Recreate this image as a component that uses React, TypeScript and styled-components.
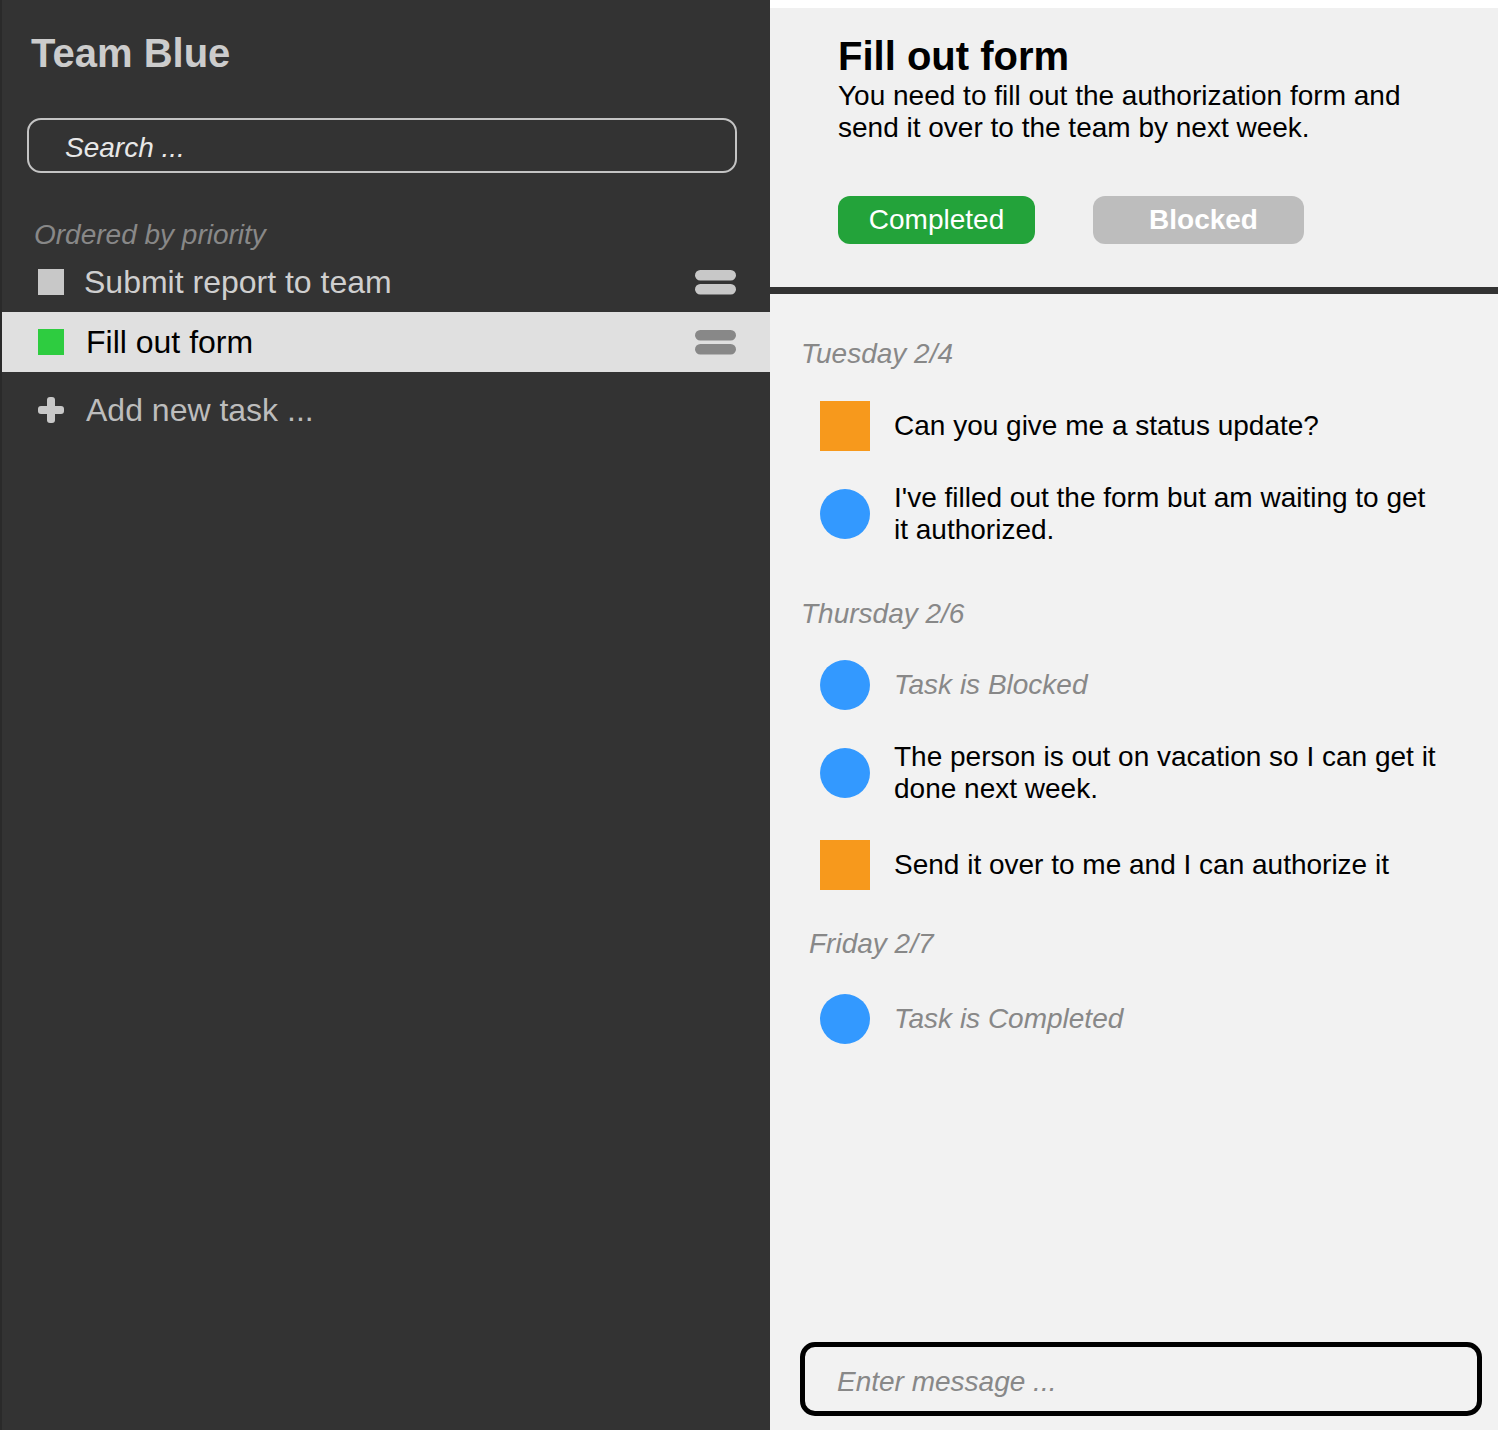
import { createGlobalStyle } from "styled-components";
import styled from "styled-components";

const GlobalStyle = createGlobalStyle`
    html, body {
        margin: 0;
        padding: 0;
        background: #f2f2f2;
    }
    * {
        box-sizing: border-box;
    }
    body {
        font-family: "Liberation Sans", Arial, sans-serif;
    }
`

const Page = styled.div`
    display: flex;
    width: 1498px;
    height: 1430px;
    overflow: hidden;
`

/* ---------- sidebar ---------- */

const Sidebar = styled.aside`
    width: 770px;
    flex-shrink: 0;
    display: flex;
    flex-direction: column;
    background: #333333;
    border-left: 2px solid #2a2a2a;
`

const TeamTitle = styled.h1`
    margin: 30px 0 0 29px;
    font-size: 40px;
    line-height: 46px;
    font-weight: bold;
    color: #cccccc;
`

const SearchBox = styled.input`
    margin: 42px 0 0 25px;
    width: 710px;
    height: 55px;
    padding: 5px 0 0 36px;
    border: 2px solid #c4c4c4;
    border-radius: 14px;
    background: transparent;
    font-family: inherit;
    font-size: 28px;
    font-style: italic;
    color: #e8e8e8;
    outline: none;

    &::placeholder {
        color: #e8e8e8;
    }
`

const OrderLabel = styled.div`
    margin: 45px 0 0 32px;
    font-size: 28px;
    line-height: 34px;
    font-style: italic;
    color: #888888;
`

const TaskList = styled.ul`
    list-style: none;
    margin: 0;
    padding: 0;
`

const TaskRow = styled.li<{ $selected: boolean }>`
    display: flex;
    align-items: center;
    gap: ${p => p.$selected ? "22px" : "20px"};
    height: 60px;
    padding: 0 34px 0 36px;
    background: ${p => p.$selected ? "#e0e0e0" : "transparent"};
    color: ${p => p.$selected ? "#000000" : "#cfcfcf"};
`

const PrioritySquare = styled.span<{ $color: string }>`
    width: 26px;
    height: 26px;
    flex-shrink: 0;
    background: ${p => p.$color};
`

const TaskName = styled.span`
    flex: 1;
    font-size: 32px;
    line-height: 36px;
`

const AddRow = styled.div`
    display: flex;
    align-items: center;
    gap: 22px;
    height: 76px;
    padding-left: 36px;
    color: #bdbdbd;
    font-size: 32px;
`

function Handle(props: { color: string }) {
    return (
        <svg width="41" height="25" viewBox="0 0 41 25">
            <rect x="0" y="0" width="41" height="10.5" rx="5.25" fill={props.color} />
            <rect x="0" y="14" width="41" height="10.5" rx="5.25" fill={props.color} />
        </svg>
    )
}

function Plus() {
    return (
        <svg width="26" height="26" viewBox="0 0 26 26">
            <rect x="9" y="0" width="8" height="26" rx="3" fill="#c8c8c8" />
            <rect x="0" y="9" width="26" height="8" rx="3" fill="#c8c8c8" />
        </svg>
    )
}

/* ---------- detail panel ---------- */

const Detail = styled.main`
    flex: 1;
    display: flex;
    flex-direction: column;
    background: #f2f2f2;
    border-top: 8px solid #ffffff;
`

const Header = styled.header`
    padding: 26px 0 43px 68px;
    background: #f0f0f0;
    border-bottom: 7px solid #333333;
`

const TaskTitle = styled.h2`
    margin: 0;
    font-size: 40px;
    line-height: 44px;
    font-weight: bold;
    color: #000000;
`

const TaskDescription = styled.p`
    margin: 2px 0 0 0;
    width: 600px;
    font-size: 28px;
    line-height: 32px;
    color: #000000;
`

const StatusBar = styled.div`
    display: flex;
    gap: 58px;
    margin-top: 52px;
`

const StatusButton = styled.button<{ $active: boolean, $width: number }>`
    width: ${p => p.$width}px;
    height: 48px;
    border: none;
    border-radius: 12px;
    background: ${p => p.$active ? "#23a33a" : "#bdbdbd"};
    color: #ffffff;
    font-family: inherit;
    font-size: 28px;
    font-weight: ${p => p.$active ? "normal" : "bold"};
    padding: ${p => p.$active ? "0" : "0 0 0 10px"};
`

const Feed = styled.section`
    flex: 1;
    display: flex;
    flex-direction: column;
`

const DayLabel = styled.div<{ $gap: number, $indent: number }>`
    margin: ${p => p.$gap}px 0 0 ${p => p.$indent}px;
    font-size: 28px;
    line-height: 34px;
    font-style: italic;
    color: #888888;
`

const Message = styled.div<{ $gap: number }>`
    display: flex;
    align-items: center;
    gap: 24px;
    min-height: 50px;
    margin: ${p => p.$gap}px 58px 0 50px;
`

const Avatar = styled.span<{ $kind: "square" | "circle" }>`
    width: 50px;
    height: 50px;
    flex-shrink: 0;
    border-radius: ${p => p.$kind === "circle" ? "50%" : "0"};
    background: ${p => p.$kind === "circle" ? "#3399ff" : "#f7991c"};
`

const MessageText = styled.span<{ $system: boolean }>`
    font-size: 28px;
    line-height: 32px;
    font-style: ${p => p.$system ? "italic" : "normal"};
    color: ${p => p.$system ? "#888888" : "#000000"};
`

const Composer = styled.input`
    margin: 0 16px 14px 30px;
    height: 74px;
    padding: 5px 0 0 32px;
    border: 5px solid #000000;
    border-radius: 15px;
    background: transparent;
    font-family: inherit;
    font-size: 28px;
    font-style: italic;
    color: #000000;
    outline: none;

    &::placeholder {
        color: #888888;
    }
`

type FeedItem =
    | { type: "day", label: string, gap: number, indent: number }
    | { type: "msg", text: string, who: "square" | "circle", system?: boolean, gap: number }

const feed: FeedItem[] = [
    { type: "day", label: "Tuesday 2/4", gap: 43, indent: 31 },
    { type: "msg", who: "square", text: "Can you give me a status update?", gap: 30 },
    { type: "msg", who: "circle", text: "I've filled out the form but am waiting to get it authorized.", gap: 31 },
    { type: "day", label: "Thursday 2/6", gap: 51, indent: 31 },
    { type: "msg", who: "circle", text: "Task is Blocked", system: true, gap: 29 },
    { type: "msg", who: "circle", text: "The person is out on vacation so I can get it done next week.", gap: 31 },
    { type: "msg", who: "square", text: "Send it over to me and I can authorize it", gap: 35 },
    { type: "day", label: "Friday 2/7", gap: 37, indent: 39 },
    { type: "msg", who: "circle", text: "Task is Completed", system: true, gap: 33 },
]

export default function App() {
    const tasks = [
        { name: "Submit report to team", color: "#c8c8c8", selected: false },
        { name: "Fill out form", color: "#2ecc40", selected: true },
    ]

    return (
        <>
            <GlobalStyle />
            <Page>
                <Sidebar>
                    <TeamTitle>Team Blue</TeamTitle>
                    <SearchBox placeholder="Search ..." />
                    <OrderLabel>Ordered by priority</OrderLabel>
                    <TaskList>
                        {tasks.map(t => (
                            <TaskRow key={t.name} $selected={t.selected}>
                                <PrioritySquare $color={t.color} />
                                <TaskName>{t.name}</TaskName>
                                <Handle color={t.selected ? "#888888" : "#c8c8c8"} />
                            </TaskRow>
                        ))}
                    </TaskList>
                    <AddRow>
                        <Plus />
                        <span>Add new task ...</span>
                    </AddRow>
                </Sidebar>

                <Detail>
                    <Header>
                        <TaskTitle>Fill out form</TaskTitle>
                        <TaskDescription>
                            You need to fill out the authorization form and send it over to the team by next week.
                        </TaskDescription>
                        <StatusBar>
                            <StatusButton $active $width={197}>Completed</StatusButton>
                            <StatusButton $active={false} $width={211}>Blocked</StatusButton>
                        </StatusBar>
                    </Header>

                    <Feed>
                        {feed.map((item, i) => item.type === "day"
                            ? <DayLabel key={i} $gap={item.gap} $indent={item.indent}>{item.label}</DayLabel>
                            : (
                                <Message key={i} $gap={item.gap}>
                                    <Avatar $kind={item.who} />
                                    <MessageText $system={!!item.system}>{item.text}</MessageText>
                                </Message>
                            )
                        )}
                    </Feed>

                    <Composer placeholder="Enter message ..." />
                </Detail>
            </Page>
        </>
    )
}
